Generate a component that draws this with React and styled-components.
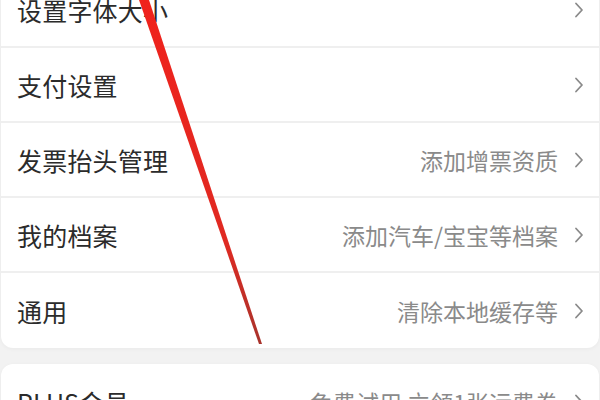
import React from 'react';
import styled, { createGlobalStyle } from 'styled-components';

const GlobalStyle = createGlobalStyle`
  html, body {
    margin: 0;
    padding: 0;
    background: #f2f2f2;
    overflow: hidden;
  }
  body {
    font-family: "Noto Sans CJK SC", "Noto Sans", sans-serif;
  }
`;

const Page = styled.div`
  position: relative;
  width: 600px;
  height: 400px;
  overflow: hidden;
  background: #f2f2f2;
`;

const List = styled.div`
  margin-top: -27px;
  display: flex;
  flex-direction: column;
  gap: 16px;
`;

const Card = styled.div`
  background: #fff;
  border-radius: 12px;
  margin: 0 1px;
  overflow: hidden;
  box-shadow: 0 1px 4px rgba(0, 0, 0, 0.04);
`;

const Row = styled.div`
  height: 73px;
  display: flex;
  align-items: center;
  padding: 0 15px 0 16px;
  border-bottom: 2px solid #efefef;

  &:last-child {
    border-bottom: none;
    height: 75px;
  }
`;

const Label = styled.span`
  flex: 1;
  font-size: 25px;
  color: #2b2b2b;
  letter-spacing: 0.2px;
`;

const Hint = styled.span`
  font-size: 23px;
  color: #8a8a8a;
  margin-right: 16px;
`;

const Chevron = () => (
  <svg width="10" height="16" viewBox="0 0 10 16">
    <path d="M2 1.5 L8 8 L2 14.5" fill="none" stroke="#8a8a8a" strokeWidth="1.8" strokeLinecap="round" strokeLinejoin="round" />
  </svg>
);

const Marker = styled.svg`
  position: absolute;
  left: 0;
  top: 0;
  pointer-events: none;
`;

const groups = [
  [
    { label: '设置字体大小' },
    { label: '支付设置' },
    { label: '发票抬头管理', hint: '添加增票资质' },
    { label: '我的档案', hint: '添加汽车/宝宝等档案' },
    { label: '通用', hint: '清除本地缓存等' },
  ],
  [{ label: 'PLUS会员', hint: '免费试用 立领1张运费券' }],
];

export default function App() {
  return (
    <Page>
      <GlobalStyle />
      <List>
        {groups.map((items, i) => (
          <Card key={i}>
            {items.map((item) => (
              <Row key={item.label}>
                <Label>{item.label}</Label>
                {item.hint && <Hint>{item.hint}</Hint>}
                <Chevron />
              </Row>
            ))}
          </Card>
        ))}
      </List>
      <Marker width="600" height="400" viewBox="0 0 600 400">
        <defs>
          <linearGradient id="pen" x1="0" y1="0" x2="0" y2="1">
            <stop offset="0" stopColor="#f0221c" />
            <stop offset="0.7" stopColor="#e02a22" />
            <stop offset="1" stopColor="#a8332c" />
          </linearGradient>
        </defs>
        <polygon points="139,0 149,0 262,344 259,344" fill="url(#pen)" />
      </Marker>
    </Page>
  );
}
